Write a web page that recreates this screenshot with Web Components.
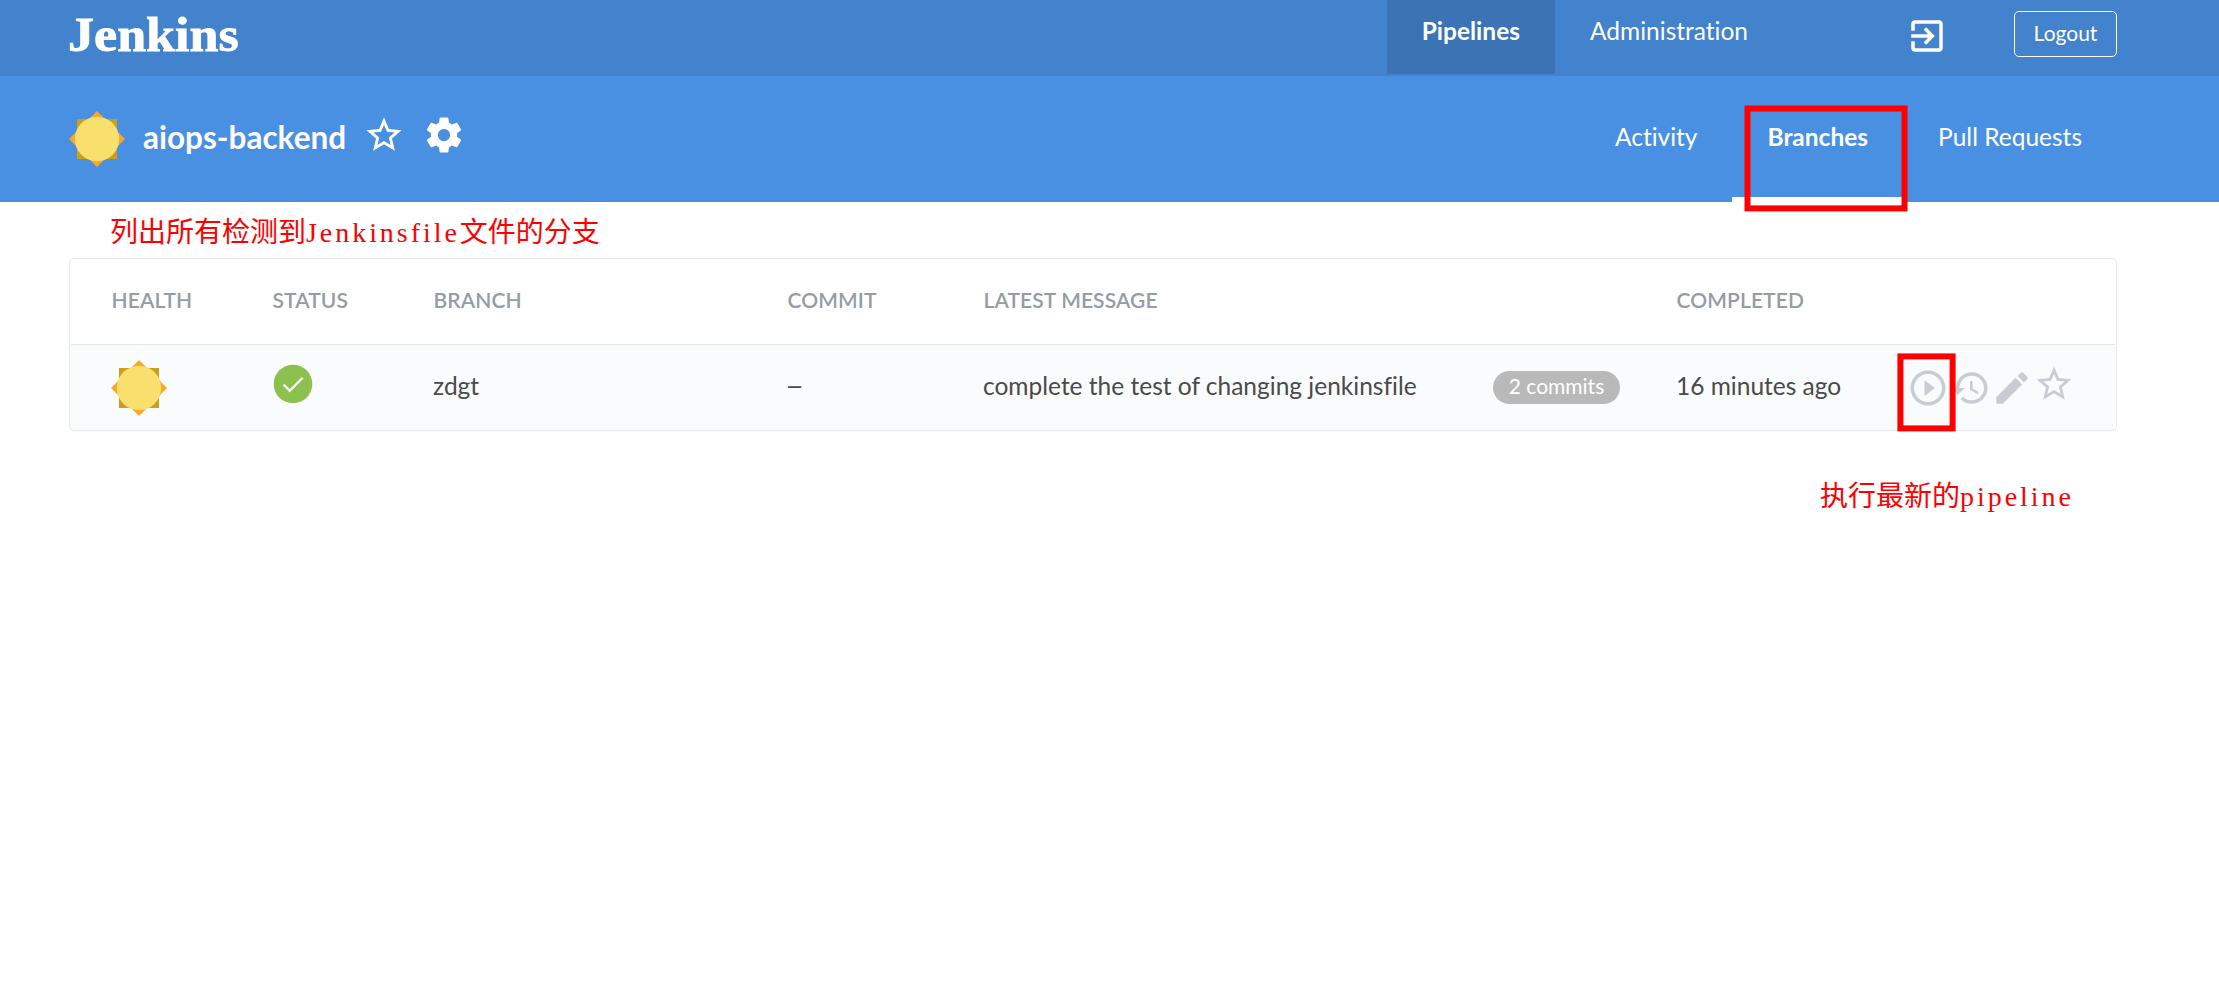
<!DOCTYPE html>
<html lang="zh-CN">
<head>
<meta charset="utf-8">
<title>Jenkins Blue Ocean</title>
<style>
html, body { margin: 0; background: #fff; }
body { font-family: Lato, "Noto Sans CJK SC", sans-serif; font-size: 24.5px; font-variant-ligatures: none; color: #4a4a4a; position: relative; height: 982px; overflow: hidden; }
</style>
</head>
<body>
<blue-app></blue-app>
<script>
const ICONS = {
  star: 'M22 9.24l-7.19-.62L12 2 9.19 8.63 2 9.24l5.46 4.73L5.82 21 12 17.27 18.18 21l-1.63-7.03L22 9.24zM12 15.4l-3.76 2.27 1-4.28-3.32-2.88 4.38-.38L12 6.1l1.71 4.04 4.38.38-3.32 2.88 1 4.28L12 15.4z',
  gear: 'M19.43 12.98c.04-.32.07-.64.07-.98s-.03-.66-.07-.98l2.11-1.65c.19-.15.24-.42.12-.64l-2-3.46c-.12-.22-.39-.3-.61-.22l-2.49 1c-.52-.4-1.08-.73-1.69-.98l-.38-2.65C14.46 2.18 14.25 2 14 2h-4c-.25 0-.46.18-.49.42l-.38 2.65c-.61.25-1.17.59-1.69.98l-2.49-1c-.23-.09-.49 0-.61.22l-2 3.46c-.13.22-.07.49.12.64l2.11 1.65c-.04.32-.07.65-.07.98s.03.66.07.98l-2.11 1.65c-.19.15-.24.42-.12.64l2 3.46c.12.22.39.3.61.22l2.49-1c.52.4 1.08.73 1.69.98l.38 2.65c.03.24.24.42.49.42h4c.25 0 .46-.18.49-.42l.38-2.65c.61-.25 1.17-.59 1.69-.98l2.49 1c.23.09.49 0 .61-.22l2-3.46c.12-.22.07-.49-.12-.64l-2.11-1.65zM12 15.5c-1.93 0-3.5-1.57-3.5-3.5s1.57-3.5 3.5-3.5 3.5 1.57 3.5 3.5-1.57 3.5-3.5 3.5z',
  exit: 'M10.09 15.59L11.5 17l5-5-5-5-1.41 1.41L12.67 11H3v2h9.67l-2.58 2.59zM19 3H5c-1.11 0-2 .9-2 2v4h2V5h14v14H5v-4H3v4c0 1.1.89 2 2 2h14c1.1 0 2-.9 2-2V5c0-1.1-.9-2-2-2z',
  play: 'M10 16.5l6-4.5-6-4.5v9zM12 2C6.48 2 2 6.48 2 12s4.48 10 10 10 10-4.48 10-10S17.52 2 12 2zm0 18c-4.41 0-8-3.59-8-8s3.59-8 8-8 8 3.59 8 8-3.59 8-8 8z',
  history: 'M13 3c-4.97 0-9 4.03-9 9H1l3.89 3.89.07.14L9 12H6c0-3.87 3.13-7 7-7s7 3.13 7 7-3.13 7-7 7c-1.93 0-3.68-.79-4.94-2.06l-1.42 1.42C8.27 19.99 10.51 21 13 21c4.97 0 9-4.03 9-9s-4.03-9-9-9zm-1 5v5l4.28 2.54.72-1.21-3.5-2.08V8H12z',
  edit: 'M3 17.25V21h3.75L17.81 9.94l-3.75-3.75L3 17.25zM20.71 7.04c.39-.39.39-1.02 0-1.41l-2.34-2.34c-.39-.39-1.02-.39-1.41 0l-1.83 1.83 3.75 3.75 1.83-1.83z'
};

function define(name, markup) {
  const t = document.createElement('template');
  t.innerHTML = markup;
  customElements.define(name, class extends HTMLElement {
    constructor() {
      super();
      this.attachShadow({ mode: 'open' }).append(t.content.cloneNode(true));
    }
  });
}

customElements.define('bo-icon', class extends HTMLElement {
  connectedCallback() {
    if (this.shadowRoot) return;
    this.attachShadow({ mode: 'open' }).innerHTML = `
      <style>:host{display:block;width:42px;height:42px;flex:none}svg{display:block;fill:currentColor}</style>
      <svg width="42" height="42" viewBox="0 0 24 24"><path d="${ICONS[this.getAttribute('name')]}"/></svg>`;
  }
});

define('weather-sun', `
  <style>:host{display:block;width:56px;height:56px;flex:none}svg{display:block}</style>
  <svg width="56" height="56" viewBox="-28 -28 56 56">
    <rect x="-20" y="-20" width="40" height="40" fill="#cb9f1d"/>
    <path d="M0-28L28 0 0 28-28 0z" fill="#f9a825"/>
    <circle r="22.2" fill="#f9df6b"/>
  </svg>`);

define('status-ok', `
  <style>:host{display:block;width:42px;height:42px;flex:none}svg{display:block}</style>
  <svg width="42" height="42" viewBox="-21 -21 42 42">
    <circle r="21" fill="#fff"/><circle r="19.3" fill="#8cc04f"/>
    <path d="M-9.4.6L-3.2 6.8 9.6-6.2" fill="none" stroke="#fff" stroke-width="2.3"/>
  </svg>`);

define('nav-link', `
  <style>
  :host{display:block;padding:0 35px 13px;line-height:61px;color:#fff;white-space:nowrap}
  :host([active]){font-weight:700;background:#3b73b5}
  </style><slot></slot>`);

define('page-tab', `
  <style>
  :host{display:block;box-sizing:border-box;height:126px;padding:0 35px;line-height:121px;color:#fff;white-space:nowrap;border-bottom:5px solid transparent}
  :host([active]){font-weight:700;border-bottom-color:#fff}
  </style><slot></slot>`);

define('logout-button', `
  <style>
  :host{display:block;box-sizing:border-box;width:103px;height:46px;border:1px solid #fff;border-radius:5px;font-size:21px;line-height:42px;text-align:center;color:#fff}
  </style><slot></slot>`);

define('top-bar', `
  <style>
  :host{display:flex;box-sizing:border-box;height:76px;padding:0 102px 0 69px;background:#4382cc;align-items:flex-start}
  .logo{margin-left:-1px;font:bold 48px/70px "Liberation Serif",serif;color:#fff;-webkit-text-stroke:.8px #fff;transform:scaleX(1.085);transform-origin:0 0}
  nav{display:flex;margin:0 123px 0 auto}
  bo-icon{color:#fff;margin:15px 66px 0 0}
  logout-button{margin-top:11px}
  </style>
  <div class="logo">Jenkins</div>
  <nav><nav-link active>Pipelines</nav-link><nav-link>Administration</nav-link></nav>
  <bo-icon name="exit"></bo-icon><logout-button>Logout</logout-button>`);

define('pipeline-header', `
  <style>
  :host{display:flex;box-sizing:border-box;height:126px;padding:0 102px 0 69px;background:#4a90e2;color:#fff}
  weather-sun{margin-top:35px}
  h1{margin:0 0 0 18px;font-size:31.5px;line-height:123px;font-weight:700;white-space:nowrap;width:220px}
  bo-icon{margin-top:38px}
  .set{margin-left:18px}
  nav{display:flex;margin-left:auto}
  </style>
  <weather-sun></weather-sun><h1>aiops-backend</h1>
  <bo-icon name="star"></bo-icon><bo-icon name="gear" class="set"></bo-icon>
  <nav><page-tab>Activity</page-tab><page-tab active>Branches</page-tab><page-tab>Pull Requests</page-tab></nav>`);

define('commit-badge', `
  <style>
  :host{display:block;box-sizing:border-box;width:127px;height:33px;border-radius:16.5px;background:#b9b9b9;color:#fff;font-size:21px;line-height:30px;text-align:center}
  </style><slot></slot>`);

define('branch-table', `
  <style>
  :host{display:block;box-sizing:border-box;margin:56px 102px 0 69px;height:173px;border:1px solid #e6e8ee;border-radius:5px;padding:0 1px;overflow:hidden}
  .row{display:grid;grid-template-columns:161px 161px 354px 196px 510px 183px 231px auto;padding-left:40px;white-space:nowrap}
  .head{height:85px;font-size:21px;line-height:82px;font-weight:600;letter-spacing:.1px;color:#969ba6;border-bottom:1px solid #e2e7ec}
  .head span{padding-left:.5px}
  .body{height:85px;line-height:81px;background:#fafbfd}
  .health{padding-top:15px}
  .status{padding-top:18px}
  .dash{transform:scaleX(1.35);transform-origin:0 0;margin-left:-2px}
  commit-badge{margin-top:26px}
  .actions{display:flex;color:#c8cdd4;padding-top:22px}
  .actions .fav{margin-top:-4px}
  </style>
  <div class="row head"><span>HEALTH</span><span>STATUS</span><span>BRANCH</span><span>COMMIT</span><span>LATEST MESSAGE</span><span></span><span>COMPLETED</span></div>
  <div class="row body">
    <div class="health"><weather-sun></weather-sun></div>
    <div class="status"><status-ok></status-ok></div>
    <span>zdgt</span><span class="dash">–</span><span>complete the test of changing jenkinsfile</span>
    <commit-badge>2 commits</commit-badge><span>16 minutes ago</span>
    <div class="actions"><bo-icon name="play"></bo-icon><bo-icon name="history"></bo-icon><bo-icon name="edit"></bo-icon><bo-icon name="star" class="fav"></bo-icon></div>
  </div>`);

define('markup-note', `
  <style>
  :host{position:absolute;font:400 28px/40px "Noto Sans CJK SC",sans-serif;color:#f00;white-space:nowrap}
  ::slotted(span){font-family:"Liberation Serif",serif;letter-spacing:2.95px}
  </style><slot></slot>`);

define('markup-frames', `
  <style>:host{position:absolute;left:0;top:0;pointer-events:none}svg{display:block}</style>
  <svg width="2219" height="500" fill="none" stroke="#f00" stroke-width="6">
    <rect x="1747.5" y="108.5" width="157" height="99.9"/>
    <rect x="1900.4" y="356.4" width="52.2" height="72"/>
  </svg>`);

define('blue-app', `
  <style>:host{display:block}</style>
  <top-bar></top-bar><pipeline-header></pipeline-header><branch-table></branch-table>
  <markup-note style="left:110px;top:210px">列出所有检测到<span>Jenkinsfile</span>文件的分支</markup-note>
  <markup-note style="left:1820px;top:474px">执行最新的<span>pipeline</span></markup-note>
  <markup-frames></markup-frames>`);
</script>
</body>
</html>
